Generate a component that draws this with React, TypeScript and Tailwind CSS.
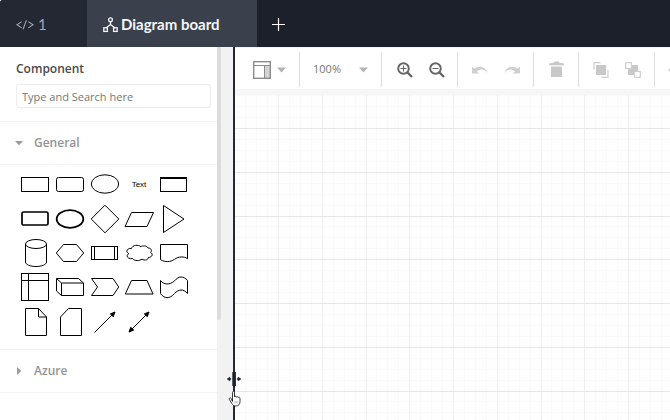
import { useState } from 'react'
import type { ReactNode } from 'react'

type Shape = { name: string; art: ReactNode }

// every shape is drawn in a 30x30 box
const shapes: Shape[] = [
  { name: 'Rectangle', art: <rect x="1.5" y="8.5" width="27" height="14" /> },
  { name: 'Rounded rectangle', art: <rect x="1.5" y="8.5" width="27" height="14" rx="2" /> },
  { name: 'Ellipse', art: <ellipse cx="15" cy="15" rx="13.7" ry="9.2" /> },
  {
    name: 'Text',
    art: (
      <text
        x="15"
        y="18"
        textAnchor="middle"
        className="fill-black stroke-none font-['Liberation_Sans',sans-serif] text-[8px]"
      >
        Text
      </text>
    ),
  },
  {
    name: 'Title box',
    art: (
      <>
        <rect x="1.5" y="8.5" width="26" height="14" />
        <path d="M1 9h27" strokeWidth="2" />
      </>
    ),
  },
  {
    name: 'Bold rectangle',
    art: <rect x="2" y="8" width="26" height="13" rx="1.5" strokeWidth="1.7" />,
  },
  { name: 'Bold ellipse', art: <ellipse cx="15" cy="15" rx="13.3" ry="8.8" strokeWidth="1.8" /> },
  { name: 'Diamond', art: <path d="M15 1.2 28.8 15 15 28.8 1.2 15Z" /> },
  { name: 'Parallelogram', art: <path d="M7.5 8.5h22l-6.500 14h-22Z" /> },
  { name: 'Triangle', art: <path d="M4.500 1.500v27L25 15Z" /> },
  {
    name: 'Cylinder',
    art: (
      <>
        <ellipse cx="16" cy="6" rx="10.500" ry="4.500" />
        <path d="M5.500 6v18c0 2.500 4.700 4.500 10.500 4.500s10.500-2 10.500-4.500V6" />
      </>
    ),
  },
  { name: 'Hexagon', art: <path d="M8.500 6.500h13L28.700 15l-7.200 8.500h-13L1.300 15Z" /> },
  {
    name: 'Process',
    art: (
      <>
        <rect x="1.500" y="8.500" width="26" height="13" />
        <path d="M4.500 8.500v13M24.500 8.500v13" />
      </>
    ),
  },
  {
    name: 'Cloud',
    art: (
      <path d="M7.500 10.500C2.500 10 1.500 14 4.800 15.600 1.500 17.500 3.500 21.500 8.500 20.500c2.300 2.800 7 2.600 9.500.6 3 1.900 6.500.6 6.300-1.600 4.600-.4 4.700-3.700 2.400-5C28.500 11.500 26.500 10 24 10c-1.200-2.500-5-2.600-7.200-1.300C14.200 6.500 8.500 6.800 7.500 10.500Z" />
    ),
  },
  {
    name: 'Document',
    art: <path d="M1.500 6.500h27v14.200c-3.500-2.400-8.500-2.500-13 .6-4.500 3-9 3-14 .4Z" />,
  },
  {
    name: 'Internal storage',
    art: (
      <>
        <rect x="1.500" y="1.500" width="27" height="27" />
        <path d="M1.500 8.500h27M8.500 1.500v27" />
      </>
    ),
  },
  {
    name: 'Cube',
    art: (
      <path d="M1.500 6.500h22l5 4.500v12.500h-22l-5-4.500ZM1.500 6.500l5 4.500h22M6.500 11v12.500" />
    ),
  },
  { name: 'Step', art: <path d="M1.500 6.500h21.500L28.700 15 23 23.500H1.500L7.500 15Z" /> },
  { name: 'Trapezoid', art: <path d="M7.500 8.500h15.500l6 13.500H1.300Z" /> },
  {
    name: 'Tape',
    art: (
      <path d="M1.500 8.500c3.500 4.300 9 4.800 14 .4 4-5 9-5.300 13-.4v13c-4-5-9-4.300-13 0-5 6-10.500 5-14 0Z" />
    ),
  },
  { name: 'Note', art: <path d="M5.500 1.500h13l8 8.500v18.500h-21ZM18.500 1.500v8.500h8" /> },
  { name: 'Card', art: <path d="M13.500 1.500h13v27h-21V10Z" /> },
  {
    name: 'Arrow',
    art: (
      <>
        <path d="M4.500 25.500 23 7" />
        <path d="m25 5-1.800 4.800L22.200 8l-1.900-1.100Z" fill="black" />
      </>
    ),
  },
  {
    name: 'Double arrow',
    art: (
      <>
        <path d="M6.500 23.500 23 7" />
        <path d="m25 5-1.800 4.800L22.200 8l-1.900-1.100Z" fill="black" />
        <path d="m5 25 1.800-4.800L7.800 22l1.900 1.100Z" fill="black" />
      </>
    ),
  },
]

const Caret = () => (
  <svg width="9" height="6" viewBox="0 0 9 6" className="fill-[#b4b4b4]">
    <path d="M0 .5h9L4.500 5.500Z" />
  </svg>
)

const Header = () => (
  <header className="flex h-[47px] overflow-hidden rounded-tl-[3px] bg-[#1c202b] font-['Lato',sans-serif]">
    <button className="flex w-[87px] items-center gap-1 bg-[#232833] pl-4 pt-0.5 text-[15px] text-[#a3a6ad]">
      <svg width="18" height="10" viewBox="0 0 19 10" fill="none" stroke="currentColor" strokeWidth="1.1">
        <path d="M6 1.500 1 4.700 6 8M13 1.500l5 3.200L13 8M11 0 7.500 9.500" />
      </svg>
      1
    </button>
    <button className="flex w-[170px] items-center gap-[3px] bg-[#3a414c] pl-4 pt-0.5 text-[15px] font-bold text-[#f4f5f6]">
      <svg width="15" height="16" viewBox="0 0 15 16" fill="none" stroke="currentColor" strokeWidth="1.300">
        <circle cx="7.500" cy="2.700" r="1.900" />
        <path d="M7.500 4.600V7.500L3 11M7.500 7.500l4.500 3.500" />
        <rect x=".8" y="10.800" width="3.600" height="3.600" />
        <rect x="10.600" y="10.800" width="3.600" height="3.600" />
      </svg>
      Diagram board
    </button>
    <button aria-label="New tab" className="flex items-center px-[15px] pt-0.5 text-white">
      <svg width="13" height="13" viewBox="0 0 13 13" stroke="currentColor" strokeWidth="1.200">
        <path d="M6.500 0v13M0 6.500h13" />
      </svg>
    </button>
  </header>
)

type SectionProps = { title: string; open: boolean; onToggle: () => void; children?: ReactNode }

const Section = ({ title, open, onToggle, children }: SectionProps) => (
  <section>
    <button
      onClick={onToggle}
      aria-expanded={open}
      className="flex h-[43px] w-full items-center gap-[11px] border-b border-[#f4f4f4] pl-[15px] text-xs font-semibold text-[#949494]"
    >
      <svg
        width="8"
        height="8"
        viewBox="0 0 8 8"
        className={`fill-[#9b9b9b] ${open ? '' : '-rotate-90'}`}
      >
        <path d="M0 2h8L4 6.200Z" />
      </svg>
      {title}
    </button>
    {open && children}
  </section>
)

const Sidebar = () => {
  const [general, setGeneral] = useState(true)
  const [azure, setAzure] = useState(false)

  return (
    <aside className="flex w-[233px] shrink-0 bg-[#f2f2f3]">
      <div className="min-w-0 flex-1 bg-white">
        <div className="border-b border-[#f4f4f4] px-4 pt-3 pb-[13px]">
          <label htmlFor="search" className="block text-xs leading-5 font-semibold text-[#4a4a4a]">
            Component
          </label>
          <input
            id="search"
            type="text"
            placeholder="Type and Search here"
            className="mt-[5px] block h-6 w-[195px] rounded-[3px] border border-[#ececec] px-[5px] text-[11px] text-[#555] outline-none placeholder:text-[#777]"
          />
        </div>
        <Section title="General" open={general} onToggle={() => setGeneral(!general)}>
          <div className="grid grid-cols-[35px_35px_34px_35px_30px] grid-rows-[35px_34px_34px_35px_30px] border-b border-[#f4f4f4] pt-1 pb-3 pl-5">
            {shapes.map((shape) => (
              <button key={shape.name} aria-label={shape.name} className="h-[30px] w-[30px]">
                <svg width="30" height="30" viewBox="0 0 30 30" fill="none" stroke="black">
                  {shape.art}
                </svg>
              </button>
            ))}
          </div>
        </Section>
        <Section title="Azure" open={azure} onToggle={() => setAzure(!azure)} />
      </div>
      <div className="w-4">
        <div className="h-[273px] w-1 rounded-b-sm bg-[#dcdcdd]" />
      </div>
    </aside>
  )
}

const Divider = () => (
  <div className="relative w-[2px] shrink-0 bg-[#242838]">
    <svg
      width="16"
      height="36"
      viewBox="0 0 16 36"
      className="absolute top-[324px] -left-[7px] z-10"
    >
      <path d="M6.300 1h3.600v14H6.300Z" fill="#1c202b" />
      <path d="m1 8 3-2v1.500h1v1H4V10ZM15 8l-3-2v1.500h-1v1h1V10Z" fill="#1c202b" stroke="#1c202b" strokeWidth=".4" />
      <path
        d="M6.500 30.500v-9c0-1.700 2-1.700 2 0v4.300c.4-1 1.800-.8 1.900.3.500-.8 1.700-.6 1.800.4.600-.6 1.800-.3 1.800.8v3c0 3-1.300 4.700-4.200 4.700-2.200 0-3.200-1-4.100-2.700l-2.300-3.800c-.7-1.400.9-2.300 1.900-1Z"
        fill="white"
        stroke="#222"
        strokeWidth=".9"
      />
      <path d="M9 30v2.500M11 30v2.500" stroke="#777" strokeWidth=".6" />
    </svg>
  </div>
)

const Group = ({ children, width }: { children: ReactNode; width: string }) => (
  <div className={`flex h-[35px] shrink-0 items-center justify-center gap-4 border-r border-[#dedede] ${width}`}>
    {children}
  </div>
)

const Toolbar = () => (
  <div className="flex h-[42px] items-center overflow-hidden border-t border-[#f4f4f4] bg-white pt-0.5">
    <Group width="w-[65px]">
      <button aria-label="Layout" className="ml-[5px] flex items-center gap-[6px]">
        <svg width="18" height="18" viewBox="0 0 18 18" fill="none" stroke="#8c8c8c">
          <rect x="11.500" y="4.500" width="6" height="13" fill="#d4d4d4" />
          <rect x=".7" y=".7" width="16.600" height="16.600" strokeWidth="1.400" />
          <path d="M0 4.500h18" />
        </svg>
        <Caret />
      </button>
    </Group>
    <Group width="w-[82px]">
      <button aria-label="Zoom level" className="flex items-center gap-[18px] text-[11px] text-[#777]">
        100%
        <Caret />
      </button>
    </Group>
    <Group width="w-[76px] pl-0.5">
      <button aria-label="Zoom in">
        <svg width="16" height="16" viewBox="0 0 16 16" fill="none" stroke="#666">
          <circle cx="6.500" cy="6.500" r="5.300" strokeWidth="1.900" />
          <path d="m10.500 10.500 4.500 4.500" strokeWidth="2.400" />
          <path d="M3.500 6.500h6M6.500 3.500v6" strokeWidth="1.100" />
        </svg>
      </button>
      <button aria-label="Zoom out">
        <svg width="16" height="16" viewBox="0 0 16 16" fill="none" stroke="#666">
          <circle cx="6.500" cy="6.500" r="5.300" strokeWidth="1.900" />
          <path d="m10.500 10.500 4.500 4.500" strokeWidth="2.400" />
          <path d="M3.500 6.500h6" strokeWidth="1.100" />
        </svg>
      </button>
    </Group>
    <Group width="w-[76px]">
      <button aria-label="Undo">
        <svg width="16" height="16" viewBox="0 0 16 16" fill="#cfcfcf">
          <path d="M0 4.500 2.300 6.800C6 3.300 13 3.800 15.800 11 12.500 7 8.500 6.400 5 9.300L7.200 11.500H0Z" />
        </svg>
      </button>
      <button aria-label="Redo">
        <svg width="16" height="16" viewBox="0 0 16 16" fill="#cfcfcf">
          <path d="m16 4.500-2.300 2.300C10 3.300 3 3.800.2 11 3.500 7 7.500 6.400 11 9.300l-2.200 2.200H16Z" />
        </svg>
      </button>
    </Group>
    <Group width="w-[45px]">
      <button aria-label="Delete">
        <svg width="15" height="17" viewBox="0 0 15 17" fill="#c8c8c8">
          <path d="M0 2.500 5 1.500 5.500.5h4l.5 1 5 1v1.700H0ZM2 5.500h11V16H2Z" />
        </svg>
      </button>
    </Group>
    <Group width="w-[76px]">
      <button aria-label="To front">
        <svg width="16" height="16" viewBox="0 0 16 16" fill="none" stroke="#cfcfcf">
          <rect x="3" y="3" width="10" height="10" fill="#c8c8c8" stroke="none" />
          <path d="M1 7.500V.7h6.500M15 8.500v6.800H8.500" strokeWidth="1.200" />
        </svg>
      </button>
      <button aria-label="To back">
        <svg width="16" height="16" viewBox="0 0 16 16" fill="white" stroke="#cfcfcf">
          <rect x="3" y="3" width="10" height="10" fill="#c8c8c8" stroke="none" />
          <rect x=".7" y=".7" width="5.800" height="5.800" strokeWidth="1.200" />
          <rect x="9.500" y="9.500" width="5.800" height="5.800" strokeWidth="1.200" />
        </svg>
      </button>
    </Group>
    <button aria-label="Fill color" className="shrink-0 pl-[13px]">
      <svg width="16" height="16" viewBox="0 0 16 16" fill="#cfcfcf">
        <path d="M0 8 8 0l7 7-8 8Z" />
      </svg>
    </button>
  </div>
)

// major lines every quarter of the tile, three faint ones between each pair
const major = [0, 44, 88, 131]
const minor = [11, 22, 33, 55, 66, 77, 98, 109, 120, 142, 153, 164]

const Board = () => (
  <svg className="block w-full flex-1 bg-[#fefefe]" shapeRendering="crispEdges">
    <defs>
      <pattern id="grid" x="43" y="39" width="175" height="175" patternUnits="userSpaceOnUse">
        {minor.map((n) => (
          <path key={n} d={`M${n}.5 0v175M0 ${n}.5h175`} stroke="#fafafa" />
        ))}
        {major.map((n) => (
          <path key={n} d={`M${n}.5 0v175`} stroke="#eeeeee" />
        ))}
        {major.map((n) => (
          <path key={n} d={`M0 ${n}.5h175`} stroke="#e6e6e6" />
        ))}
      </pattern>
    </defs>
    <rect width="100%" height="100%" fill="url(#grid)" />
    <rect width="100%" height="6" fill="#f6f6f6" />
  </svg>
)

const App = () => (
  <div className="flex min-h-screen flex-col bg-white font-['Open_Sans',sans-serif]">
    <Header />
    <div className="flex flex-1">
      <Sidebar />
      <Divider />
      <main className="flex min-w-0 flex-1 flex-col">
        <Toolbar />
        <Board />
      </main>
    </div>
  </div>
)

export default App
